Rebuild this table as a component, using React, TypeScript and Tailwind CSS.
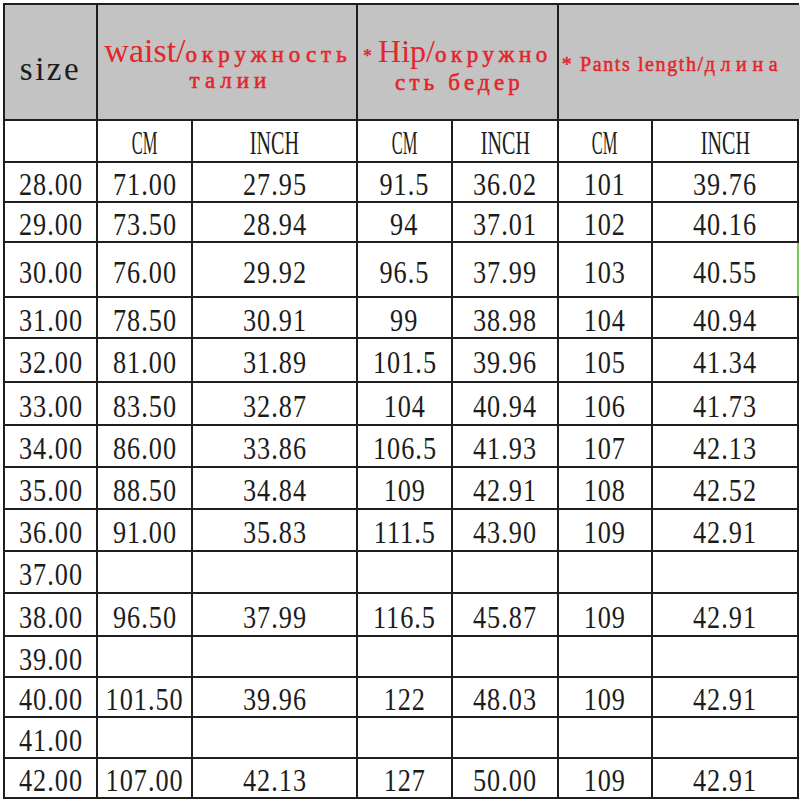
import React from "react";

const rows: string[][] = [
  ["28.00", "71.00", "27.95", "91.5", "36.02", "101", "39.76"],
  ["29.00", "73.50", "28.94", "94", "37.01", "102", "40.16"],
  ["30.00", "76.00", "29.92", "96.5", "37.99", "103", "40.55"],
  ["31.00", "78.50", "30.91", "99", "38.98", "104", "40.94"],
  ["32.00", "81.00", "31.89", "101.5", "39.96", "105", "41.34"],
  ["33.00", "83.50", "32.87", "104", "40.94", "106", "41.73"],
  ["34.00", "86.00", "33.86", "106.5", "41.93", "107", "42.13"],
  ["35.00", "88.50", "34.84", "109", "42.91", "108", "42.52"],
  ["36.00", "91.00", "35.83", "111.5", "43.90", "109", "42.91"],
  ["37.00", "", "", "", "", "", ""],
  ["38.00", "96.50", "37.99", "116.5", "45.87", "109", "42.91"],
  ["39.00", "", "", "", "", "", ""],
  ["40.00", "101.50", "39.96", "122", "48.03", "109", "42.91"],
  ["41.00", "", "", "", "", "", ""],
  ["42.00", "107.00", "42.13", "127", "50.00", "109", "42.91"],
];

function Num({ children }: { children: React.ReactNode }) {
  return (
    <span className="inline-block mt-[4px] scale-x-[0.82] text-[32px] leading-none tracking-[1.2px] text-[#1c1c1c]">
      {children}
    </span>
  );
}

function Unit({ children, sx }: { children: React.ReactNode; sx: string }) {
  return (
    <span className={`inline-block mt-[4px] text-[33px] leading-none text-[#1c1c1c] ${sx}`}>
      {children}
    </span>
  );
}

function Cell({ children, extra = "" }: { children?: React.ReactNode; extra?: string }) {
  return (
    <div className={`bg-white flex items-center justify-center ${extra}`}>
      {children}
    </div>
  );
}

const cyr = "font-normal [-webkit-text-stroke:0.6px_#e3262c]";

export default function App() {
  return (
    <div className="w-[800px] h-[800px] bg-white pl-[3px] pt-[3px] font-['Liberation_Serif',serif] overflow-hidden">
      <div className="grid w-[796px] grid-cols-[91px_93px_163px_93px_104px_92px_144px] grid-rows-[114px_40px_38px_38px_53px_39px_42px_41px_40px_40px_40px_40px_41px_39px_38px_39px_38px] gap-[2px] p-[2px] bg-[#1e1e1e]">
        {/* Header row */}
        <div className="bg-[#c3c3c3] flex items-center justify-center pt-[15px]">
          <span className="inline-block text-[33px] leading-none tracking-[2.5px] text-[#1c1c1c]">size</span>
        </div>
        <div className="col-span-2 bg-[#c3c3c3] text-center text-[#e3262c] pt-[29px] pl-[2px]">
          <div className="text-[34px] leading-[34px] whitespace-nowrap">
            waist/
            <span className={`text-[23px] leading-none tracking-[5px] ${cyr}`}>окружность</span>
          </div>
          <div className={`text-[23px] leading-[25px] tracking-[5px] whitespace-nowrap pl-[5px] ${cyr}`}>
            талии
          </div>
        </div>
        <div className="col-span-2 bg-[#c3c3c3] text-center text-[#e3262c] pt-[29px]">
          <div className="text-[32px] leading-[34px] whitespace-nowrap">
            <span className="text-[18px] leading-none font-bold mr-[6px]">*</span>
            Hip/
            <span className={`text-[23px] leading-none tracking-[4.6px] ${cyr}`}>окружно</span>
          </div>
          <div className={`text-[23px] leading-[29px] tracking-[4.2px] whitespace-nowrap pl-[4px] ${cyr}`}>
            сть бедер
          </div>
        </div>
        <div className="col-span-2 -mr-[3px] bg-[#c3c3c3] text-center text-[#e3262c] pt-[49px] pr-[14px]">
          <div className="text-[20px] leading-[20px] whitespace-nowrap [-webkit-text-stroke:0.5px_#e3262c]">
            <span className="tracking-[1.6px]">* Pants length/</span>
            <span className="tracking-[5.6px]">длина</span>
          </div>
        </div>

        {/* Units row */}
        <Cell />
        <Cell><Unit sx="scale-x-[0.5]">CM</Unit></Cell>
        <Cell><Unit sx="scale-x-[0.61]">INCH</Unit></Cell>
        <Cell><Unit sx="scale-x-[0.5]">CM</Unit></Cell>
        <Cell><Unit sx="scale-x-[0.61]">INCH</Unit></Cell>
        <Cell><Unit sx="scale-x-[0.5]">CM</Unit></Cell>
        <Cell><Unit sx="scale-x-[0.61]">INCH</Unit></Cell>

        {rows.map((r, i) =>
          r.map((v, j) => (
            <Cell
              key={`${i}-${j}`}
              extra={i === 2 && j === 6 ? "shadow-[2px_0_0_#7cc35a]" : ""}
            >
              {v ? <Num>{v}</Num> : null}
            </Cell>
          ))
        )}
      </div>
    </div>
  );
}
